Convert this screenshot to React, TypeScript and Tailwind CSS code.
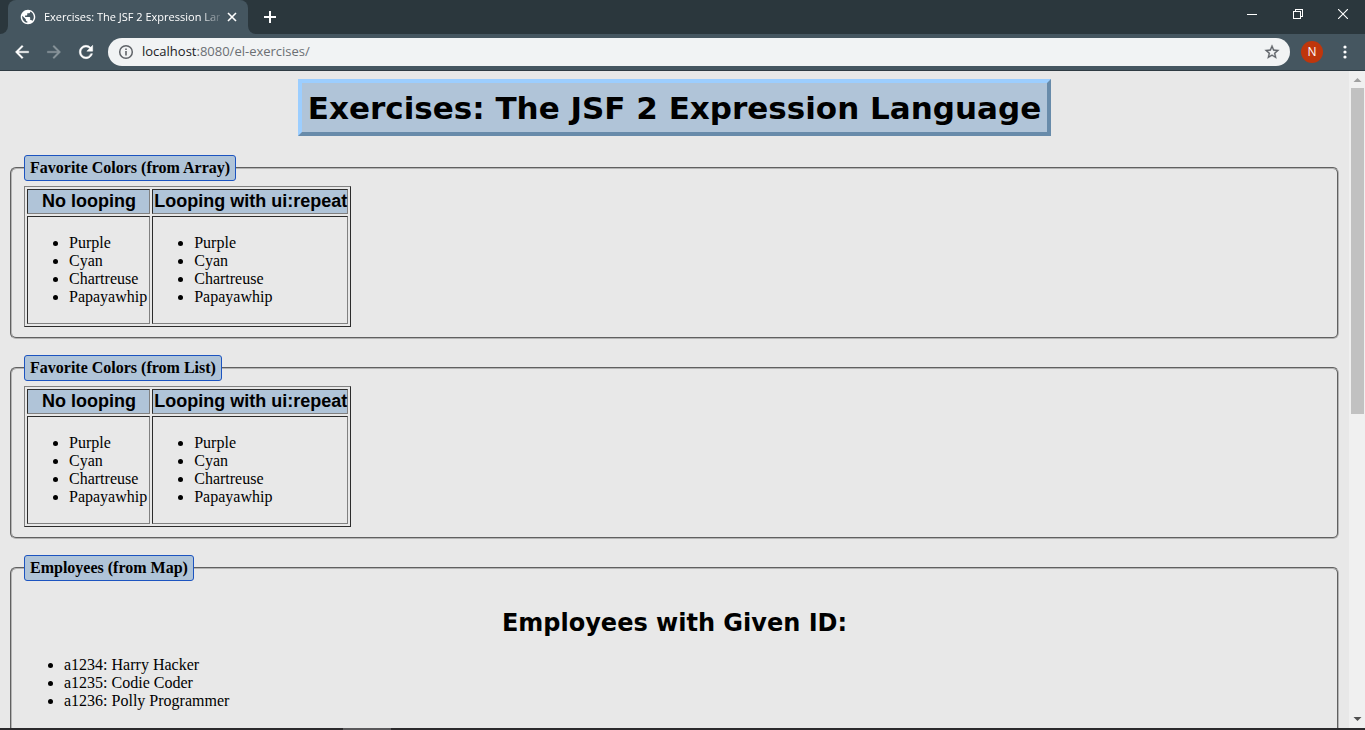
import type { ReactNode } from "react";

const colors = ["Purple", "Cyan", "Chartreuse", "Papayawhip"];

const employees = [
  { id: "a1234", name: "Harry Hacker" },
  { id: "a1235", name: "Codie Coder" },
  { id: "a1236", name: "Polly Programmer" },
];

function TabStrip() {
  return (
    <header className="flex h-[34px] shrink-0 items-stretch bg-[#2b373d] text-white">
      <div className="flex w-2 items-end bg-[#455660]">
        <div className="h-full w-full rounded-br-lg bg-[#2b373d]" />
      </div>
      <div className="flex w-60 items-center rounded-t-lg bg-[#455660] pr-2 pl-3">
        <svg viewBox="1 1 22 22" className="size-4 shrink-0" fill="#fff" aria-hidden="true">
          <path d="M12 2C6.480 2 2 6.480 2 12s4.480 10 10 10 10-4.480 10-10S17.520 2 12 2zm-1 17.930c-3.950-.490-7-3.850-7-7.930 0-.620.080-1.210.210-1.790L9 15v1c0 1.100.900 2 2 2v1.930zm6.900-2.540c-.260-.810-1-1.390-1.900-1.390h-1v-3c0-.550-.450-1-1-1H8v-2h2c.550 0 1-.450 1-1V7h2c1.100 0 2-.900 2-2v-.410c2.930 1.190 5 4.060 5 7.410 0 2.080-.800 3.970-2.100 5.390z" />
        </svg>
        <span className="ml-2 min-w-0 flex-1 overflow-hidden [mask-image:linear-gradient(to_right,black_156px,transparent_180px)] text-[11px] whitespace-nowrap">
          Exercises: The JSF 2 Expression Language
        </span>
        <button type="button" aria-label="Close tab" className="ml-1 grid size-4 place-items-center">
          <svg viewBox="0 0 10 10" className="size-[10px]" stroke="#fff" strokeWidth="1.6">
            <path d="M1 1l8 8M9 1l-8 8" />
          </svg>
        </button>
      </div>
      <div className="flex w-2 bg-[#455660]">
        <div className="h-full w-full rounded-bl-lg bg-[#2b373d]" />
      </div>
      <button type="button" aria-label="New tab" className="grid w-7 place-items-center">
        <svg viewBox="0 0 12 12" className="size-3" stroke="#fff" strokeWidth="2">
          <path d="M6 0v12M0 6h12" />
        </svg>
      </button>
      <div className="ml-auto flex pb-1.5">
        <button type="button" aria-label="Minimize" className="grid w-[46px] place-items-center">
          <svg viewBox="0 0 10 10" className="size-[10px]" stroke="#fff" shapeRendering="crispEdges">
            <path d="M0 5.500h10" />
          </svg>
        </button>
        <button type="button" aria-label="Restore" className="grid w-[46px] place-items-center">
          <svg viewBox="0 0 10 10" className="size-[10px]" fill="none" stroke="#fff" shapeRendering="crispEdges">
            <path d="M.5 2.500h7v7h-7zM2.500 2.500v-2h7v7h-2" />
          </svg>
        </button>
        <button type="button" aria-label="Close" className="grid w-11 place-items-center">
          <svg viewBox="0 0 10 10" className="size-[10px]" stroke="#fff" strokeWidth="1.1">
            <path d="M0 0l10 10M10 0L0 10" />
          </svg>
        </button>
      </div>
    </header>
  );
}

function Toolbar() {
  return (
    <nav className="flex h-[37px] shrink-0 items-center border-b border-[#2f3b43] bg-[#455660] pr-3 pl-1.5">
      <button type="button" aria-label="Back" className="grid size-8 place-items-center">
        <svg viewBox="0 0 24 24" className="size-5" fill="#fff" stroke="#fff" strokeWidth=".4">
          <path d="M20 11H7.830l5.590-5.590L12 4l-8 8 8 8 1.410-1.410L7.830 13H20v-2z" />
        </svg>
      </button>
      <button type="button" aria-label="Forward" className="grid size-8 place-items-center">
        <svg viewBox="0 0 24 24" className="size-5" fill="#89949a" stroke="#89949a" strokeWidth=".4">
          <path d="M12 4l-1.410 1.410L16.170 11H4v2h12.170l-5.580 5.590L12 20l8-8z" />
        </svg>
      </button>
      <button type="button" aria-label="Reload" className="grid size-8 place-items-center">
        <svg viewBox="0 0 24 24" className="size-5" fill="#fff" stroke="#fff" strokeWidth=".6">
          <path d="M17.650 6.350A7.958 7.958 0 0 0 12 4c-4.420 0-7.990 3.580-7.990 8s3.570 8 7.990 8c3.730 0 6.840-2.550 7.730-6h-2.080A5.990 5.990 0 0 1 12 18c-3.310 0-6-2.690-6-6s2.690-6 6-6c1.660 0 3.140.690 4.220 1.780L13 11h7V4l-2.350 2.350z" />
        </svg>
      </button>
      <div className="ml-1.5 flex h-7 flex-1 items-center rounded-full bg-[#f1f3f4] px-2.5">
        <svg viewBox="0 0 16 16" className="size-4" fill="none" stroke="#5f6368" aria-hidden="true">
          <circle cx="8" cy="8" r="6.300" strokeWidth="1.500" />
          <path d="M8 7v4.500M8 4.500V6" strokeWidth="1.600" />
        </svg>
        <a href="http://localhost:8080/el-exercises/" className="ml-2 flex-1 text-[13px] text-[#6b6f73]">
          <span className="text-[#202124]">localhost</span>:8080/el-exercises/
        </a>
        <button type="button" aria-label="Bookmark this page" className="grid size-4 place-items-center">
          <svg viewBox="1 1 22 22" className="size-4 shrink-0" fill="#5f6368" stroke="#5f6368" strokeWidth=".4">
            <path d="M22 9.240l-7.190-.620L12 2 9.190 8.630 2 9.240l5.460 4.730L5.820 21 12 17.270 18.180 21l-1.630-7.030L22 9.240zM12 15.400l-3.760 2.270 1-4.280-3.320-2.880 4.380-.380L12 6.100l1.710 4.040 4.380.380-3.320 2.880 1 4.280L12 15.400z" />
          </svg>
        </button>
      </div>
      <button
        type="button"
        aria-label="Profile"
        className="ml-[11px] grid size-[22px] place-items-center rounded-full bg-[#bf360c] text-xs text-white"
      >
        N
      </button>
      <button type="button" aria-label="Menu" className="ml-3.5 grid h-7 w-4 place-items-center">
        <svg viewBox="0 0 4 14" className="h-[14px] w-1" fill="#fff">
          <circle cx="2" cy="2" r="1.600" />
          <circle cx="2" cy="7" r="1.600" />
          <circle cx="2" cy="12" r="1.600" />
        </svg>
      </button>
    </nav>
  );
}

function Section({ title, children }: { title: string; children: ReactNode }) {
  return (
    <fieldset className="mx-0.5 mb-4 rounded-md border-2 border-[#b4b4b4] px-3 pt-[5px] pb-2.5 [border-style:groove]">
      <legend className="rounded-[3px] border border-[#1c54c0] bg-[#b0c4d8] px-[5px] py-[3px] leading-[18px] font-bold">
        {title}
      </legend>
      {children}
    </fieldset>
  );
}

function ColorList() {
  return (
    <ul className="my-4 list-disc pl-10">
      {colors.map((color) => (
        <li key={color}>{color}</li>
      ))}
    </ul>
  );
}

function ColorTable() {
  const cell = "border border-t-[#2c2c2c] border-r-[#808080] border-b-[#808080] border-l-[#2c2c2c] py-px pl-px";
  return (
    <table className="border-separate border-spacing-0.5 border border-t-[#808080] border-r-[#2c2c2c] border-b-[#2c2c2c] border-l-[#808080]">
      <thead>
        <tr className="bg-[#b0c4d8] font-['Liberation_Sans',Arial,sans-serif] text-lg leading-[21px]">
          <th className={cell}>No looping</th>
          <th className={cell}>Looping with ui:repeat</th>
        </tr>
      </thead>
      <tbody>
        <tr>
          <td className={`${cell} pr-0.5`}>
            <ColorList />
          </td>
          <td className={`${cell} pr-0.5`}>
            <ColorList />
          </td>
        </tr>
      </tbody>
    </table>
  );
}

function ScrollBar() {
  return (
    <div className="flex w-4 shrink-0 flex-col items-center bg-[#f0f0f0]" aria-hidden="true">
      <svg viewBox="0 0 16 17" className="h-[17px] w-4 shrink-0" fill="#a0a0a0">
        <path d="M8.500 7l4 4h-8z" />
      </svg>
      <div className="flex min-h-0 w-full flex-1 pr-px pl-0.5">
        <div className="h-[326px] w-full bg-[#c1c1c1]" />
      </div>
      <svg viewBox="0 0 16 17" className="h-[17px] w-4 shrink-0" fill="#505050">
        <path d="M4.500 6h8l-4 4z" />
      </svg>
    </div>
  );
}

export default function App() {
  return (
    <div className="flex h-screen flex-col overflow-hidden font-['Open_Sans','Noto_Sans',sans-serif]">
      <TabStrip />
      <Toolbar />
      <div className="flex min-h-0 flex-1">
        <main className="min-w-0 flex-1 overflow-hidden bg-[#e8e8e8] p-2 font-['Liberation_Serif','Times_New_Roman',serif] text-base leading-[18px] text-black">
          <h1 className="mx-auto mb-[19px] w-fit border-4 border-t-[#9cceff] border-r-[#688baa] border-b-[#688baa] border-l-[#9cceff] bg-[#b0c4d8] px-1.5 pt-1.5 pb-1 font-['DejaVu_Sans',Verdana,sans-serif] text-[31px] leading-[39px] font-bold">
            Exercises: The JSF 2 Expression Language
          </h1>
          <Section title="Favorite Colors (from Array)">
            <ColorTable />
          </Section>
          <Section title="Favorite Colors (from List)">
            <ColorTable />
          </Section>
          <Section title="Employees (from Map)">
            <h2 className="mt-[22px] mb-[18px] text-center font-['DejaVu_Sans',Verdana,sans-serif] text-2xl leading-[30px] font-bold">
              Employees with Given ID:
            </h2>
            <ul className="my-4 list-disc pl-10">
              {employees.map(({ id, name }) => (
                <li key={id}>
                  {id}: {name}
                </li>
              ))}
            </ul>
          </Section>
        </main>
        <ScrollBar />
      </div>
      <footer className="flex h-0.5 shrink-0 bg-[#2b2a2c]">
        <div className="ml-[343px] w-12 bg-[#5a595b]" />
      </footer>
    </div>
  );
}
